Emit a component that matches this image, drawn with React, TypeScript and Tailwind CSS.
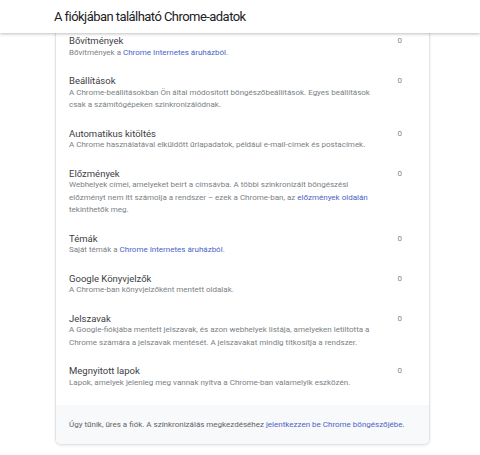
import React from 'react';

type Item = {
  title: string;
  desc: React.ReactNode;
  count: number;
};

const Link = ({ children }: { children: React.ReactNode }) => <span className="text-[#4b63c6]">{children}</span>;

const items: Item[] = [{
  title: 'Bővítmények',
  desc: <>Bővítmények a <Link>Chrome Internetes áruházból</Link>.</>,
  count: 0
}, {
  title: 'Beállítások',
  desc: 'A Chrome-beállításokban Ön által módosított böngészőbeállítások. Egyes beállítások csak a számítógépeken szinkronizálódnak.',
  count: 0
}, {
  title: 'Automatikus kitöltés',
  desc: 'A Chrome használatával elküldött űrlapadatok, például e-mail-címek és postacímek.',
  count: 0
}, {
  title: 'Előzmények',
  desc: <>Webhelyek címei, amelyeket beírt a címsávba. A többi szinkronizált böngészési előzményt nem itt számolja a rendszer – ezek a Chrome-ban, az <Link>előzmények oldalán</Link> tekinthetők meg.</>,
  count: 0
}, {
  title: 'Témák',
  desc: <>Saját témák a <Link>Chrome Internetes áruházból</Link>.</>,
  count: 0
}, {
  title: 'Google Könyvjelzők',
  desc: 'A Chrome-ban könyvjelzőként mentett oldalak.',
  count: 0
}, {
  title: 'Jelszavak',
  desc: 'A Google-fiókjába mentett jelszavak, és azon webhelyek listája, amelyeken letiltotta a Chrome számára a jelszavak mentését. A jelszavakat mindig titkosítja a rendszer.',
  count: 0
}, {
  title: 'Megnyitott lapok',
  desc: 'Lapok, amelyek jelenleg meg vannak nyitva a Chrome-ban valamelyik eszközén.',
  count: 0
}];

const App = () => {
  return <div className="w-[480px] h-[455px] overflow-hidden bg-white font-['Roboto',sans-serif]">
      <header className="relative z-10 h-[33px] bg-white shadow-[0_1px_3px_rgba(0,0,0,0.25)] flex items-center pl-[54px]">
        <h1 className="text-[13px] tracking-[-0.55px] text-[#202124] leading-none">A fiókjában található Chrome-adatok</h1>
      </header>
      <div className="ml-[55px] w-[375px] border-x border-b border-[#e3e3e3] rounded-b-[6px] shadow-[0_1px_3px_rgba(0,0,0,0.08)] overflow-hidden">
        <ul className="pb-[8px]">
          {items.map(item => <li key={item.title} className="flex justify-between pl-[13px] pr-[27px] py-[8px] first:pt-[2px]">
              <div className="max-w-[311px]">
                <div className="text-[9.5px] leading-[11.5px] text-[#3c4043]">{item.title}</div>
                <div className="text-[8px] leading-[12.5px] text-[#7a7f85]">{item.desc}</div>
              </div>
              <div className="text-[8px] leading-[12px] text-[#80868b]">{item.count}</div>
            </li>)}
        </ul>
        <div className="bg-[#f8f9fa] h-[39px] flex items-center pl-[13px] text-[8px] text-[#5f6368]">
          <span>Úgy tűnik, üres a fiók. A szinkronizálás megkezdéséhez <Link>jelentkezzen be Chrome böngészőjébe</Link>.</span>
        </div>
      </div>
    </div>;
};

export default App;
